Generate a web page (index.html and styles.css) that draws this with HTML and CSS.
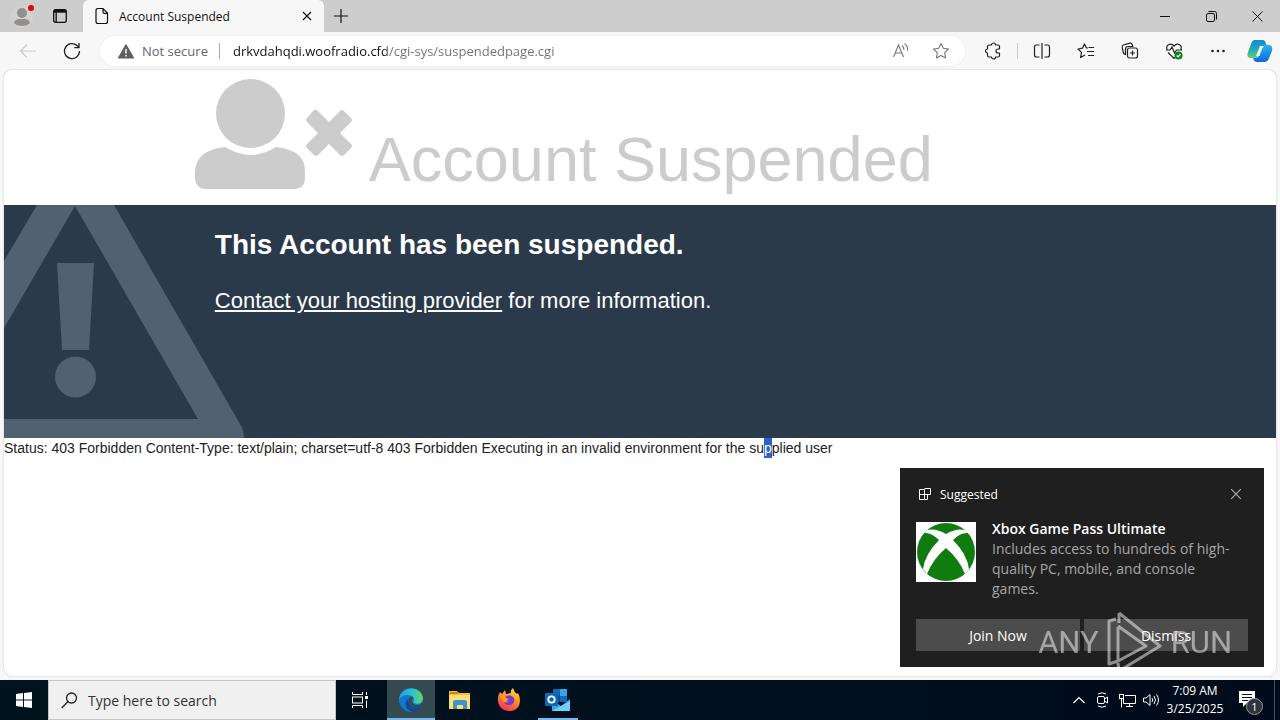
FILE: index.html
```
<!DOCTYPE html>
<html lang="en">
<head>
<meta charset="utf-8">
<title>Account Suspended</title>
<link rel="stylesheet" href="styles.css">
</head>
<body>
<header class="tabstrip">
  <button class="profile" aria-label="Profile">
    <svg width="24" height="24" viewBox="0 0 24 24"><circle cx="12" cy="13" r="11" fill="#d3d2d1"/><circle cx="12" cy="9" r="5" fill="#91908f"/><path d="M4 19c1-4 4-4 8-4s7 0 8 4c-3 4-13 4-16 0z" fill="#91908f"/><circle cx="21" cy="4" r="3" fill="#e3000f"/></svg>
  </button>
  <button class="tab-actions" aria-label="Tab actions">
    <svg width="16" height="16" viewBox="0 0 16 16" fill="none" stroke="#111" stroke-width="1.3"><rect x="1.7" y="1.7" width="12.6" height="12.6" rx="2"/><path d="M2 3.2h12" stroke-width="3"/><path d="M4.2 4v10"/></svg>
  </button>
  <div class="tab">
    <svg width="14" height="18" viewBox="0 0 14 18" fill="none" stroke="#111" stroke-width="1.2"><path d="M3 1.5h5l4.500 4.500v8.500q0 2-2 2h-7.500q-2 0-2-2v-11q0-2 2-2zM8 1.500v3.500q0 1.300 1.300 1.300h3.200"/></svg>
    <span class="tab-title">Account Suspended</span>
    <button class="tab-close" aria-label="Close tab"><svg width="10" height="10" viewBox="0 0 10 10" stroke="#111" stroke-width="1.200"><path d="M1 1l8 8M9 1l-8 8"/></svg></button>
  </div>
  <button class="new-tab" aria-label="New tab"><svg width="14" height="14" viewBox="0 0 14 14" stroke="#111" stroke-width="1.200"><path d="M7 0v14M0 7h14"/></svg></button>
  <div class="window-buttons">
    <button aria-label="Minimize"><svg width="10" height="10" viewBox="0 0 10 10" stroke="#111"><path d="M0 5.500h10"/></svg></button>
    <button aria-label="Restore"><svg width="11" height="11" viewBox="0 0 11 11" fill="none" stroke="#111"><rect x=".5" y="2.500" width="8" height="8" rx="1.500"/><path d="M2.500.5h6q2 0 2 2v6"/></svg></button>
    <button aria-label="Close"><svg width="11" height="11" viewBox="0 0 11 11" stroke="#111"><path d="M.5.5l10 10M10.500.5l-10 10"/></svg></button>
  </div>
</header>
<nav class="toolbar">
  <button aria-label="Back"><svg width="18" height="16" viewBox="0 0 18 16" fill="none" stroke="#cbcbcb" stroke-width="1.200"><path d="M17 8H1.500M8 1.500L1.500 8 8 14.500"/></svg></button>
  <button aria-label="Refresh"><svg width="18" height="18" viewBox="0 0 18 18" fill="none" stroke="#222" stroke-width="1.300"><path d="M16.500 9A7.500 7.500 0 1 1 14 3.500L16 5.500M16 1v4.700h-4.700"/></svg></button>
  <div class="omnibox">
    <svg width="16" height="15" viewBox="0 0 16 15"><path d="M8 .5L15.700 14H.3z" fill="#5f5f5f" stroke="#5f5f5f" stroke-linejoin="round"/><path d="M8 5v4.500M8 11v1.500" stroke="#fff" stroke-width="1.500"/></svg>
    <label class="security" for="address">Not secure</label>
    <input class="address" id="address" type="text" value="drkvdahqdi.woofradio.cfd/cgi-sys/suspendedpage.cgi">
    <button aria-label="Read aloud"><svg width="18" height="16" viewBox="0 0 18 16" fill="none" stroke="#777" stroke-width="1.100"><path d="M1.500 14L6.500 2l5 12M3.300 10h6.500M10 2.500q2 1.500 2 4.500M12.500.8q3.500 2 3 7"/></svg></button>
    <button aria-label="Add to favorites"><svg width="18" height="18" viewBox="0 0 18 18" fill="none" stroke="#777" stroke-width="1.100" stroke-linejoin="round"><path d="M9 1.500l2.300 4.800 5.200.7-3.800 3.700.9 5.200L9 13.400l-4.600 2.500.9-5.200L1.500 7l5.200-.7z"/></svg></button>
  </div>
  <button class="extensions" aria-label="Extensions"><svg width="18" height="18" viewBox="0 0 18 18" fill="none" stroke="#222" stroke-width="1.200" stroke-linejoin="round"><path d="M5 3h2.500a2 2 0 0 1 4 0H14q1.500 0 1.500 1.500V7H14a2 2 0 0 0 0 4h1.500v2.500q0 1.500-1.500 1.500h-2.500a2 2 0 0 1-4 0H5q-1.500 0-1.500-1.500V11a2 2 0 0 1 0-4V4.500Q3.500 3 5 3z"/></svg></button>
  <span class="divider"></span>
  <button aria-label="Split screen"><svg width="18" height="18" viewBox="0 0 18 18" fill="none" stroke="#222" stroke-width="1.200"><path d="M6.500 3H3.500q-2 0-2 2v8q0 2 2 2h3M11.500 3h3q2 0 2 2v8q0 2-2 2h-3M9 1v16"/></svg></button>
  <button aria-label="Favorites"><svg width="18" height="18" viewBox="0 0 18 18" fill="none" stroke="#222" stroke-width="1.200" stroke-linejoin="round"><path d="M11 6L9.500 6 7.500 2 5.500 6.200 1 7l3.500 3.400-.9 5.100 4.400-2.500M11.500 5.500H17M10 9.500h7M11 13.500h6"/></svg></button>
  <button aria-label="Collections"><svg width="18" height="18" viewBox="0 0 18 18" fill="none" stroke="#222" stroke-width="1.200"><rect x="6.500" y="6" width="10" height="10" rx="2"/><path d="M11.500 8.500v5M9 11h5M4.500 12.500q-1.700-.3-2.200-2L1.200 5q-.2-1.600 1.200-2L9 1.200q1.700-.2 2.200 1.300l.6 2H7q-2.500 0-2.500 2.500z"/></svg></button>
  <button aria-label="Browser essentials"><svg width="18" height="18" viewBox="0 0 18 18" fill="none" stroke="#222" stroke-width="1.200"><path d="M2 7.500C.5 2.500 6 .5 9 4c3-3.500 8.500-1.500 7 3.500M1 8h4l2-3 2.500 6L11.500 8H17M3 10.500l6 6 1-1"/><circle cx="13.500" cy="13.500" r="4" fill="#12821c" stroke="none"/><path d="M11.700 13.500l1.400 1.400 2.300-2.700" stroke="#fff"/></svg></button>
  <button aria-label="Settings and more"><svg width="16" height="4" viewBox="0 0 16 4" fill="#222"><circle cx="2.500" cy="2" r="1.300"/><circle cx="8" cy="2" r="1.300"/><circle cx="13.500" cy="2" r="1.300"/></svg></button>
  <button class="copilot" aria-label="Copilot">
    <svg width="26" height="24" viewBox="0 0 26 24"><defs><linearGradient id="cop-left" x2="0" y2="1"><stop stop-color="#1688d8"/><stop offset=".5" stop-color="#20a9b9"/><stop offset="1" stop-color="#5bd36b"/></linearGradient><linearGradient id="cop-right" x2="0" y2="1"><stop stop-color="#25b6f5"/><stop offset="1" stop-color="#1464dd"/></linearGradient></defs><path d="M8 1h8q2 0 3 4l1 2h-3q-3 0-4 3l-2 6q-1 3-4 3H4q-5 0-3-6L4 5q1-4 4-4z" fill="url(#cop-left)"/><path d="M17 6h5q4 0 3 6l-3 7q-1 4-5 4h-7q-3 0-4-4h2q3 0 4-3z" fill="url(#cop-right)"/><path d="M13 7h4q-2 1-2.500 3.500L12.500 17H9z" fill="#eefaff"/></svg>
  </button>
</nav>
<main class="page">
  <div class="hero">
    <svg class="user-icon" width="158" height="110" viewBox="0 0 158 110" fill="#ccc"><circle cx="55.500" cy="34.500" r="34.500"/><path d="M30 68Q44 76 56 76t25-8Q110 71 110 92v6q0 12-11 12H11Q0 110 0 98v-7Q2 71 30 68z"/><path d="M119 31q2-1 4 1l11 11 11-11q2-2 4 0l7 7q2 2 0 4l-11 11 11 11q2 2 0 4l-7 7q-2 2-4 0l-11-11-11 11q-2 2-4 0l-7-7q-2-2 0-4l11-11-11-11q-2-2 0-4z"/></svg>
    <h1>Account Suspended</h1>
  </div>
  <section class="notice">
    <svg class="warning" width="240" height="233" viewBox="0 0 240 233" fill="#52616f"><path d="M33 0h77l126 219q4 6 4 14H0v-19h194L71 1 0 123V56zM53 58h37l-5 87H58z"/><circle cx="71.500" cy="172" r="20.500"/></svg>
    <div class="notice-text">
      <h2>This Account has been suspended.</h2>
      <p><a href="#contact">Contact your hosting provider</a> for more information.</p>
    </div>
  </section>
  <p class="status">Status: 403 Forbidden Content-Type: text/plain; charset=utf-8 403 Forbidden Executing in an invalid environment for the su<span class="selected">p</span>plied user</p>
</main>
<footer class="taskbar">
  <button class="start" aria-label="Start"><svg width="16" height="16" viewBox="0 0 16 16" fill="#fff"><path d="M0 2l7-1v6.500H0zM8 1l8-1v7.500H8zM0 8.500h7V15l-7-1zM8 8.500h8V16l-8-1z"/></svg></button>
  <label class="search">
    <svg width="17" height="17" viewBox="0 0 17 17" fill="none" stroke="#222" stroke-width="1.300"><circle cx="10.500" cy="6" r="5"/><path d="M7 9.500L.7 16"/></svg>
    <input type="text" placeholder="Type here to search" aria-label="Type here to search">
  </label>
  <button aria-label="Task view"><svg width="17" height="16" viewBox="0 0 17 16" fill="none" stroke="#fff"><path d="M.5 0v2.500h10V0M.5 16v-2.500h10V16M14.500 0v3M14.500 8.500V16"/><rect x=".5" y="5" width="10" height="6"/><path d="M13 5.500h3" stroke-width="3"/></svg></button>
  <div class="apps">
    <button class="app active" aria-label="Edge"><svg width="24" height="24" viewBox="0 0 24 24"><defs><linearGradient id="edge-top"><stop stop-color="#249ce0"/><stop offset=".55" stop-color="#2bc3ca"/><stop offset="1" stop-color="#60da65"/></linearGradient></defs><circle cx="12" cy="12" r="12" fill="#1676cf"/><path d="M0 12C0-2 22-4 24 10c0 6-7 7-9.500 4.500-.5-1 1-2 .5-4C13 6 3 5 0 12z" fill="url(#edge-top)"/><path d="M9 11c-5 4-2 12 5 13 4-.5 7-3 8.500-6-6 3-13 1-13.500-7z" fill="#104a91"/><path d="M14.500 9q-4 3 0 7 4 3 10-2v3q-5 3-9 2-6-2-6-7 1-4 5-3z" fill="#354951"/></svg></button>
    <button class="app" aria-label="File Explorer"><svg width="22" height="20" viewBox="0 0 22 20"><path d="M0 1h8l2 2h11v16H0z" fill="#f4b936"/><path d="M0 5h21v14H0z" fill="#ffdd72"/><path d="M1 3h8" stroke="#d98713" stroke-width="2"/><path d="M4 19v-7q0-2 2-2h10q2 0 2 2v7h-4v-4H8v4z" fill="#3c94cd"/></svg></button>
    <button class="app" aria-label="Firefox"><svg width="24" height="24" viewBox="0 0 24 24"><defs><linearGradient id="fox" x1=".8" y1="0" x2=".3" y2="1"><stop stop-color="#ffe534"/><stop offset=".5" stop-color="#ff8b21"/><stop offset="1" stop-color="#f52b65"/></linearGradient></defs><path d="M3 4l2 2 3-4 1 4 5-1q-1-3 2-5 1 4 4 6l1-1c4 8 2 18-9 18C2 23-2 12 3 4z" fill="url(#fox)"/><path d="M8 9q5-4 9 1c2 6-5 10-10 5l5-1q-3-1-4-5z" fill="#743bd0"/><path d="M3 8q5-2 6 2l3 1-4 3q-3-1-5-6z" fill="#ff9b28"/></svg></button>
    <button class="app running" aria-label="Outlook"><svg width="26" height="24" viewBox="0 0 26 24"><path d="M8 1h14v13H8z" fill="#1666b8"/><path d="M15 1h7v7h-7z" fill="#31a8e9"/><path d="M8 7h7v7H8z" fill="#114b8f"/><path d="M7 12l9 6 9-7v12H7z" fill="#3ba7e9"/><path d="M7 23l18-10v10z" fill="#73cdf5"/><rect y="5" width="13" height="13" rx="1" fill="#0868b9"/><circle cx="6.500" cy="11.500" r="3.200" fill="none" stroke="#fff" stroke-width="1.800"/></svg></button>
  </div>
  <div class="tray">
    <button aria-label="Show hidden icons"><svg width="12" height="8" viewBox="0 0 12 8" fill="none" stroke="#fff" stroke-width="1.200"><path d="M.5 7L6 1.500 11.500 7"/></svg></button>
    <button aria-label="Meet now"><svg width="14" height="16" viewBox="0 0 14 16" fill="none" stroke="#fff"><rect x="1.500" y="4.500" width="7" height="7" rx="1.500"/><path d="M8.500 7l3-2v6l-3-2M2 2q4-2.500 8 0M2 14q4 2.500 8 0"/></svg></button>
    <button aria-label="Network"><svg width="17" height="15" viewBox="0 0 17 15" fill="none" stroke="#fff"><path d="M6 2.500h10.500v8H4.500V6M10.500 10.500v3M7 13.500h7M2.500 6v8.500"/><rect x=".5" y="1.500" width="4" height="4"/></svg></button>
    <button aria-label="Volume"><svg width="17" height="14" viewBox="0 0 17 14" fill="none" stroke="#fff"><path d="M.5 5h2.500l4-3.500v11L3 9H.5zM9 5q1.500 2 0 4M11 3q3 4 0 8M13.500 1.500q4 5.500 0 11"/></svg></button>
    <div class="clock"><span>7:09 AM</span><span>3/25/2025</span></div>
    <button class="notifications" aria-label="Notifications"><svg width="26" height="26" viewBox="0 0 26 26"><path d="M1 4h16v12H9l-4 4v-4H1z" fill="#fff"/><path d="M4 7.500h10M4 10.500h10M4 13.500h6" stroke="#07101d"/></svg><span class="count">1</span></button>
  </div>
</footer>
<aside class="toast">
  <div class="toast-head">
    <svg width="12" height="12" viewBox="0 0 12 12" fill="none" stroke="#fff"><path d="M.5 1.500h5v10h-5zM.5 6.500h11M5.500 11.500h3v-5M5.500.5h6v6"/></svg>
    <span>Suggested</span>
    <button aria-label="Close notification"><svg width="10" height="10" viewBox="0 0 10 10" stroke="#aaa" stroke-width="1.200"><path d="M0 0l10 10M10 0L0 10"/></svg></button>
  </div>
  <div class="toast-body">
    <svg width="60" height="60" viewBox="0 0 60 60"><path d="M0 0h60v60H0z" fill="#fff"/><circle cx="30" cy="30" r="29" fill="#107c10"/><path d="M11 8q9-2 19 4 10-6 19-4l3 3q-7-1-15 7 14 14 16 29l-4 5Q43 37 30 26 17 37 11 52l-4-5Q9 32 23 18 15 10 8 11z" fill="#fff"/></svg>
    <div class="toast-copy">
      <strong>Xbox Game Pass Ultimate</strong>
      <p>Includes access to hundreds of high-quality PC, mobile, and console games.</p>
    </div>
  </div>
  <div class="toast-actions"><button>Join Now</button><button>Dismiss</button></div>
</aside>
<div class="watermark">
  <span>ANY</span>
  <svg width="58" height="64" viewBox="0 0 58 64" fill="none" stroke="#fff" stroke-width="3" stroke-linejoin="round"><path d="M10 9L3 11v43l9-3M13 3l41 33L13 61l-1-8M13 3v10M12 17v34l28-15-28-20"/></svg>
  <span>RUN</span>
</div>
</body>
</html>
```
FILE: styles.css
```
* { box-sizing: border-box; }
body {
  margin: 0;
  min-height: 100vh;
  display: flex;
  flex-direction: column;
  background: #f7f7f7;
  color: #222;
  font-family: "Open Sans", "Noto Sans", sans-serif;
}
button {
  display: flex;
  align-items: center;
  justify-content: center;
  padding: 0;
  border: 0;
  background: transparent;
  color: inherit;
  font: inherit;
}
input { min-width: 0; border: 0; outline: 0; padding: 0; background: transparent; font: inherit; }
svg { flex-shrink: 0; }

.tabstrip { display: flex; height: 32px; background: #cdcdcd; }
.profile { width: 44px; }
.tab-actions { width: 32px; }
.tab {
  display: flex;
  align-items: center;
  width: 241px;
  margin-left: 7px;
  padding: 0 11px 0 12px;
  border-radius: 6px 6px 0 0;
  background: #f7f7f7;
}
.tab-title { flex: 1; margin-left: 10px; color: #111; font-size: 12px; }
.tab-close { width: 12px; }
.new-tab { width: 33px; }
.window-buttons { display: flex; margin-left: auto; }
.window-buttons button { width: 46px; }

.toolbar {
  display: flex;
  align-items: center;
  height: 38px;
  padding-left: 6px;
}
.toolbar button { width: 44px; height: 30px; }
.omnibox {
  flex: 1;
  display: flex;
  align-items: center;
  height: 30px;
  margin: 0 6px;
  padding: 0 4px 0 18px;
  border-radius: 15px;
  background: #fff;
  box-shadow: 0 0 2px #e4e4e4;
  font-size: 13px;
}
.omnibox button { width: 40px; }
.security { margin-left: 8px; padding-right: 11px; border-right: 1px solid #aaa; color: #666; line-height: 16px; }
.address {
  flex: 1;
  margin-left: 13px;
  background: linear-gradient(90deg, #111 154px, #707070 154px);
  background-clip: text;
  -webkit-background-clip: text;
  color: transparent;
}
.divider { width: 5px; height: 16px; border-left: 1px solid #ccc; margin-left: 2px; margin-right: -2px; }
.toolbar .copilot { width: 44px; margin-right: -2px; margin-left: -2px; }

.page {
  flex: 1;
  margin: 0 4px 4px;
  border-radius: 8px;
  background: #fff;
  box-shadow: 0 0 2px #bbb;
  font-family: "Liberation Sans", Arial, sans-serif;
}
.hero { display: flex; gap: 16px; height: 135px; padding: 9px 15% 0; }
.hero h1 { margin: 44px 0 0; color: #ccc; font-size: 63px; font-weight: 400; line-height: 72px; white-space: nowrap; }
.notice { position: relative; min-height: 233px; padding: 24px 15% 20px; background: #2a3a4b; color: #fff; }
.warning { position: absolute; left: 0; top: 0; }
.notice-text { position: relative; padding-left: 20px; }
.notice h2 { margin: 0 0 24px; font-size: 28px; line-height: 32px; }
.notice p { margin: 0; font-size: 22px; line-height: 32px; }
.notice a { color: inherit; }
.status { margin: 0; font-size: 14px; line-height: 20px; }
.selected { display: inline-block; background: #2b62c8; color: #fff; }

.taskbar { display: flex; height: 40px; background: linear-gradient(90deg, #00141e, #000b1c); color: #fff; }
.taskbar > button { width: 48px; }
.search {
  display: flex;
  align-items: center;
  width: 288px;
  padding-left: 12px;
  border: 1px solid #c4c4c4;
  background: #f0f0f0;
}
.search input { flex: 1; margin-left: 10px; font-size: 14px; }
.search input::placeholder { color: #333; opacity: 1; }
.apps { display: flex; gap: 1px; margin-left: 3px; }
.app { width: 48px; border-top: 2px solid transparent; border-bottom: 2px solid transparent; }
.active { background: #354951; border-color: #354951 transparent #76b9ed; }
.running { width: 40px; margin-left: 4px; border-bottom-color: #76b9ed; }
.tray { display: flex; margin-left: auto; }
.tray button { width: 24px; }
.clock { display: flex; flex-direction: column; align-items: center; justify-content: center; width: 64px; font-size: 12px; line-height: 18px; }
.tray .notifications { position: relative; width: 48px; margin-right: 5px; border-right: 1px solid #46505c; }
.count {
  position: absolute;
  left: 19px;
  top: 18px;
  width: 17px;
  height: 17px;
  border: 1px solid #999;
  border-radius: 50%;
  background: #30343b;
  font-size: 11px;
  line-height: 15px;
}

.toast {
  position: fixed;
  right: 16px;
  bottom: 53px;
  width: 364px;
  padding: 16px;
  background: #1f1f1f;
  color: #fff;
  font-size: 14px;
}
.toast-head { display: flex; align-items: center; height: 20px; padding: 0 7px 0 3px; font-size: 12px; }
.toast-head span { flex: 1; margin-left: 9px; }
.toast-body { display: flex; gap: 16px; margin-top: 15px; padding-right: 12px; line-height: 20px; }
.toast-body > svg { margin-top: 3px; }
.toast-copy strong { font-weight: 600; }
.toast-copy p { margin: 0; color: #a6a6a6; }
.toast-actions { display: flex; gap: 4px; margin-top: 20px; }
.toast-actions button { flex: 1; height: 32px; background: #4c4c4c; }
.watermark {
  position: fixed;
  right: 48px;
  bottom: 46px;
  display: flex;
  align-items: center;
  gap: 7px;
  color: #fff;
  font-family: Roboto, "Liberation Sans", sans-serif;
  font-size: 31px;
  opacity: .5;
  pointer-events: none;
}
```
